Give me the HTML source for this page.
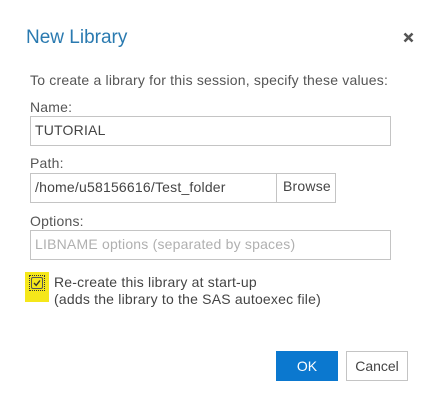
<!DOCTYPE html>
<html><head><style>
body{margin:0;width:436px;height:401px;background:#fff;font-family:"Liberation Sans",sans-serif;color:#555;position:relative;overflow:hidden}
.a{position:absolute}
.t{font-size:14px;letter-spacing:0.2px;white-space:nowrap}
.box{position:absolute;border:1px solid #c4c4c4;box-sizing:border-box;background:#fff}
</style></head><body>
<div class="a" style="left:26px;top:27px;font-size:19px;color:#2a7ab0">New Library</div>
<svg class="a" style="left:403px;top:32px" width="11" height="11"><path d="M1.5 1.5L9.5 9.5M9.5 1.5L1.5 9.5" stroke="#555" stroke-width="2.6"/></svg>
<div class="a t" style="left:30px;top:72px">To create a library for this session, specify these values:</div>
<div class="a t" style="left:30px;top:99px">Name:</div>
<div class="box" style="left:30px;top:116px;width:361px;height:30px"></div>
<div class="a t" style="left:35px;top:122px;color:#444">TUTORIAL</div>
<div class="a t" style="left:30px;top:155px">Path:</div>
<div class="box" style="left:30px;top:173px;width:247px;height:30px"></div>
<div class="a t" style="left:35px;top:179px;color:#444">/home/u58156616/Test_folder</div>
<div class="box" style="left:276px;top:173px;width:60px;height:30px"></div>
<div class="a t" style="left:283px;top:178px;color:#444">Browse</div>
<div class="a t" style="left:30px;top:213px">Options:</div>
<div class="box" style="left:30px;top:230px;width:361px;height:30px"></div>
<div class="a t" style="left:35px;top:236px;color:#b0b0b0">LIBNAME options (separated by spaces)</div>
<div class="a" style="left:25px;top:272px;width:24px;height:30px;background:#f5e71a"></div>
<div class="a" style="left:29px;top:275px;width:16px;height:16px;border:1px dotted #333;box-sizing:border-box"></div>
<div class="a" style="left:31px;top:277px;width:12px;height:12px;border:1px solid #555;border-radius:2px;box-sizing:border-box"></div>
<svg class="a" style="left:31px;top:277px" width="12" height="12"><path d="M3 6L5.2 8.3L9 3.5" stroke="#333" stroke-width="1.4" fill="none"/></svg>
<div class="a t" style="left:54px;top:274px;line-height:17px;color:#444">Re-create this library at start-up<br>(adds the library to the SAS autoexec file)</div>
<div class="a" style="left:276px;top:351px;width:62px;height:30px;background:#0b78cf;color:#fff;font-size:14px;text-align:center;line-height:30px">OK</div>
<div class="box" style="left:346px;top:351px;width:62px;height:30px;text-align:center;line-height:28px;font-size:14px;color:#444">Cancel</div>
</body></html>
